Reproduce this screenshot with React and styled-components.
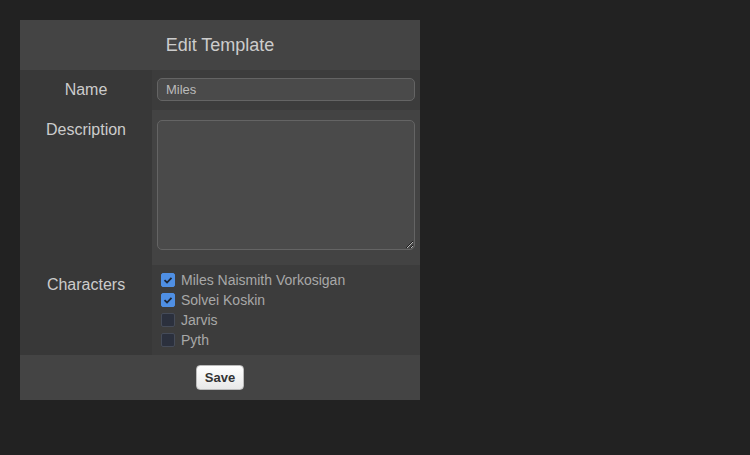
import styled, { createGlobalStyle } from "styled-components";

const GlobalStyle = createGlobalStyle`
    html, body {
        margin: 0;
        padding: 0;
        background: #222222;
        font-family: "Liberation Sans", Arial, sans-serif;
    }
`

const Page = styled.div`
    padding: 20px;
    min-height: 415px;
    background: #222222;
`

const Panel = styled.div`
    width: 400px;
    background: #3c3c3c;
`

const Header = styled.div`
    height: 50px;
    display: flex;
    align-items: center;
    justify-content: center;
    background: #444444;
    color: #cccccc;
    font-size: 18px;
`

const Row = styled.div`
    display: grid;
    grid-template-columns: 132px 1fr;
    height: ${props => props.height}px;
`

const LabelCell = styled.div`
    background: #383838;
    color: #cccccc;
    font-size: 16px;
    line-height: 18px;
    text-align: center;
    padding-top: 11px;
`

const ValueCell = styled.div`
    background: ${props => props.bg || "#3c3c3c"};
    padding: ${props => props.spacing || "8px 5px"};
`

const TextInput = styled.input`
    display: block;
    width: 100%;
    height: 23px;
    box-sizing: border-box;
    padding: 0 8px;
    background: #4a4a4a;
    border: 1px solid #646464;
    border-radius: 5px;
    color: #bbbbbb;
    font-family: inherit;
    font-size: 13px;
    outline: none;
`

const TextArea = styled.textarea`
    display: block;
    width: 100%;
    height: 130px;
    box-sizing: border-box;
    background: #4a4a4a;
    border: 1px solid #646464;
    border-radius: 5px;
    color: #bbbbbb;
    font-family: inherit;
    font-size: 13px;
    outline: none;
    resize: vertical;
    color-scheme: dark;
`

const CheckList = styled.div`
    display: flex;
    flex-direction: column;
    padding: 5px 0 0 9px;
`

const CheckItem = styled.label`
    display: flex;
    align-items: center;
    gap: 6px;
    height: 20px;
    color: #a8a8a8;
    font-size: 14px;
`

const Box = styled.span`
    width: 14px;
    height: 14px;
    box-sizing: border-box;
    border-radius: 2px;
    display: flex;
    align-items: center;
    justify-content: center;
    background: ${props => props.checked ? "#4f8fe3" : "#2b303d"};
    border: 1px solid ${props => props.checked ? "#4f8fe3" : "#454b58"};
`

const Footer = styled.div`
    height: 45px;
    display: flex;
    align-items: center;
    justify-content: center;
    background: #444444;
`

const SaveButton = styled.button`
    width: 48px;
    height: 25px;
    border: 1px solid #bbbbbb;
    border-radius: 4px;
    background: linear-gradient(#ffffff, #e8e8e8);
    color: #333333;
    font-family: inherit;
    font-weight: bold;
    font-size: 13px;
    padding: 0;
    cursor: pointer;
`

const characters = [
    {name: "Miles Naismith Vorkosigan", checked: true},
    {name: "Solvei Koskin", checked: true},
    {name: "Jarvis", checked: false},
    {name: "Pyth", checked: false},
];

function Check({checked}){
    return (
        <Box checked={checked}>
            {checked && (
                <svg width="10" height="10" viewBox="0 0 10 10">
                    <path d="M1.5 5.2 L4 7.5 L8.5 2.8" stroke="#1c2636" strokeWidth="1.8" fill="none" />
                </svg>
            )}
        </Box>
    );
}

export default function App(){
    return (
        <Page>
            <GlobalStyle />
            <Panel>
                <Header>Edit Template</Header>
                <Row height={40}>
                    <LabelCell>Name</LabelCell>
                    <ValueCell>
                        <TextInput type="text" defaultValue="Miles" />
                    </ValueCell>
                </Row>
                <Row height={155}>
                    <LabelCell>Description</LabelCell>
                    <ValueCell bg="#434343" spacing="10px 5px">
                        <TextArea />
                    </ValueCell>
                </Row>
                <Row height={90}>
                    <LabelCell>Characters</LabelCell>
                    <ValueCell spacing="0">
                        <CheckList>
                            {characters.map(c => (
                                <CheckItem key={c.name}>
                                    <Check checked={c.checked} />
                                    {c.name}
                                </CheckItem>
                            ))}
                        </CheckList>
                    </ValueCell>
                </Row>
                <Footer>
                    <SaveButton type="button">Save</SaveButton>
                </Footer>
            </Panel>
        </Page>
    );
}
